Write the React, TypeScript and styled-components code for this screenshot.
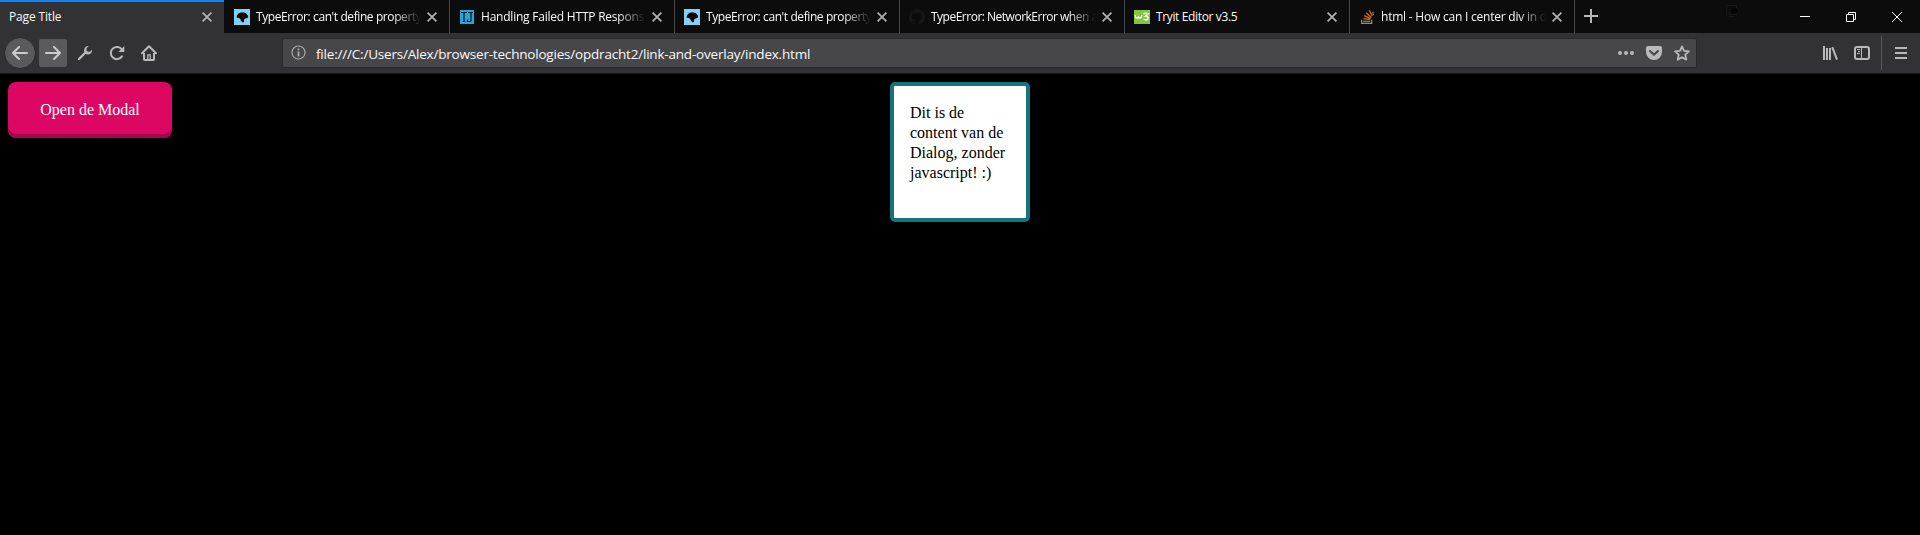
import React from "react";
import styled, { createGlobalStyle } from "styled-components";

const GlobalStyle = createGlobalStyle`
  * { box-sizing: border-box; }
  body { margin: 0; background: #000; overflow: hidden; }
  svg { display: block; flex: none; }
`;

const Window = styled.div`
  width: 1920px;
  height: 535px;
  display: flex;
  flex-direction: column;
  background: #000;
  font-family: "Open Sans", "Noto Sans", sans-serif;
`;

const TabBar = styled.div`
  height: 33px;
  display: flex;
  background: #0c0c0d;
`;

const Tab = styled.div<{ $active?: boolean }>`
  width: ${(p) => (p.$active ? 224 : 225)}px;
  height: 33px;
  display: flex;
  align-items: center;
  padding: 1px 12px 0 9px;
  background: ${(p) => (p.$active ? "#323234" : "transparent")};
  border-left: ${(p) => (p.$active ? "0" : "1px solid #4a4a4b")};
  box-shadow: ${(p) => (p.$active ? "inset 0 2px #0a84ff" : "none")};

  &:nth-child(2) { border-left-color: #0c0c0d; }
`;

const Favicon = styled.span`
  width: 16px;
  height: 16px;
  margin-right: 6px;
`;

const TabTitle = styled.span<{ $spacing: number; $fade?: boolean }>`
  flex: 1;
  min-width: 0;
  margin-right: 6px;
  white-space: nowrap;
  color: #f9f9fa;
  font-size: 12px;
  line-height: 18px;
  letter-spacing: ${(p) => p.$spacing}px;
  ${(p) => p.$fade && "mask-image: linear-gradient(to left, transparent 0, #000 28px);"}
`;

const NewTab = styled.div`
  border-left: 1px solid #4a4a4b;
  padding: 9px 0 0 9px;
  flex: 1;
`;

const SendTab = styled.div`
  padding: 5px 62px 0 0;
`;

const WindowButtons = styled.div`
  display: flex;
  gap: 36px;
  padding: 12px 18px 0 0;
`;

const NavBar = styled.div`
  height: 41px;
  display: flex;
  align-items: center;
  padding: 0 13px 1px 4px;
  background: #323234;
  border-bottom: 1px solid #18181a;
`;

const BackButton = styled.div`
  width: 32px;
  height: 32px;
  display: grid;
  place-items: center;
  border-radius: 50%;
  background: #5a5a5c;
  border: 1px solid #29292b;
`;

const ForwardButton = styled.div`
  width: 28px;
  height: 28px;
  margin: 0 10px 0 3px;
  display: grid;
  place-items: center;
  border-radius: 2px;
  background: #5a5a5c;
`;

const NavTools = styled.div`
  display: flex;
  gap: 16px;
`;

const UrlBar = styled.div`
  width: 1415px;
  height: 30px;
  margin-left: 125px;
  display: flex;
  align-items: center;
  padding: 0 6px 0 8px;
  background: #474749;
  border: 1px solid #29292b;
  border-radius: 2px;
`;

const Url = styled.span`
  flex: 1;
  margin-left: 10px;
  padding-top: 2px;
  color: #f9f9fa;
  font-size: 13.5px;
  line-height: 20px;
  letter-spacing: -0.2px;
  white-space: nowrap;
`;

const UrlActions = styled.div`
  display: flex;
  gap: 12px;
`;

const SideTools = styled.div`
  margin-left: auto;
  display: flex;
  align-items: center;
  gap: 16px;
`;

const Separator = styled.div`
  width: 1px;
  height: 34px;
  margin: 0 -3px 0 -5px;
  background: #5a5a5c;
`;

const Page = styled.main`
  flex: 1;
  padding: 8px;
  display: grid;
  grid-template-columns: 1fr 140px 1fr;
  align-items: start;
  font-family: "Liberation Serif", serif;
  font-size: 16px;
  line-height: 20px;
`;

const OpenButton = styled.a`
  width: 164px;
  height: 56px;
  display: grid;
  place-items: center;
  color: #fff;
  background: #db0762;
  border-radius: 8px;
  box-shadow: inset 0 -4px #a6064e;
`;

const Dialog = styled.div`
  width: 140px;
  height: 140px;
  padding: 17px 16px 15px;
  background: #fff;
  color: #000;
  border: 4px solid #16727c;
  border-radius: 5px;
`;

const ink = "#b9b9ba";

const CloseIcon = () => (
  <svg width="10" height="10" viewBox="0 0 10 10" stroke="#b4b4b5" strokeWidth="1.7">
    <path d="M.6.6l8.8 8.8M9.4.6L.6 9.4" />
  </svg>
);

const MdnIcon = () => (
  <svg width="16" height="16" viewBox="0 0 16 16">
    <path fill="#83d0f2" d="M0 0h16v16H0z" />
    <path d="M2.500 8.500L3 6.500 4.200 4.800 6.500 3.500h3L12 4.200l1.300 1.800.9 1-.4 1.800-2.300.8-1.500.9.1 2.200-1.300.8-2-1.700-.4-1.600-1-.9z" />
  </svg>
);

const TjIcon = () => (
  <svg width="16" height="16" viewBox="0 0 16 16">
    <path fill="#20a8dd" d="M1 1h14v14H1z" />
    <path d="M2 3.500h6M5 3.500V13M3.800 12.500h2.400M9 3.500h5M12 3.500v8q0 1-1 1H8.500v-2" fill="none" stroke="#071014" strokeWidth="1.200" />
  </svg>
);

const GithubIcon = () => (
  <svg width="16" height="16" viewBox="0 0 16 16" fill="#171718">
    <path d="M8 0a8 8 0 0 0-2.500 15.600c.4.1.5-.2.5-.4v-1.400c-2.200.5-2.700-1-2.700-1-.4-.9-.9-1.200-.9-1.200-.7-.5.1-.5.1-.5.8.1 1.200.8 1.200.8.7 1.300 1.900.9 2.300.7.1-.5.3-.9.5-1.100-1.800-.2-3.600-.9-3.600-4 0-.9.3-1.600.8-2.100-.1-.2-.4-1 .1-2.100 0 0 .7-.2 2.200.8a7.600 7.600 0 0 1 4 0c1.500-1 2.200-.8 2.200-.8.4 1.100.2 1.900.1 2.100.5.6.8 1.300.8 2.100 0 3.100-1.900 3.800-3.700 4 .3.3.6.8.6 1.500v2.200c0 .2.1.5.5.4A8 8 0 0 0 8 0z" />
  </svg>
);

const W3Icon = () => (
  <svg width="16" height="16" viewBox="0 0 16 16">
    <path fill="#83c440" d="M0 1h16v14H0z" />
    <path d="M1.200 6v1.200q0 1.800 1.500 1.800T4.400 7.200Q4.400 9 6 9T7.800 6.500V6M9.500 5.200q1-1.500 2.900-.9 1.800 1.400-.8 2.800 3.400.3 2.200 2.900-1.800 1.900-4.200 0M14.700 4v1.500" fill="none" stroke="#fff" strokeWidth="1.350" />
  </svg>
);

const StackIcon = () => (
  <svg width="16" height="16" viewBox="0 0 16 16" fill="none">
    <path d="M2.700 10.800v3.600h10v-3.600" stroke="#8d8f92" strokeWidth="1.200" />
    <path d="M4.200 12.300h7M4.400 9.700l6.800 1M5.200 6.600l6.400 3M7.200 3.700l5 4.800M10.200 1.200l3.200 6M13.900 2.700l.3 3.500" stroke="#d5681d" strokeWidth="1.300" />
  </svg>
);

const Arrow = ({ flip = false }: { flip?: boolean }) => (
  <svg width="16" height="16" viewBox="0 0 16 16" fill="none" stroke="#cbcbcc" strokeWidth="2" strokeLinecap="round" strokeLinejoin="round">
    <path d={flip ? "M1 8h14M9 2l6 6-6 6" : "M15 8H1M7 2L1 8l6 6"} />
  </svg>
);

const WrenchIcon = () => (
  <svg width="16" height="16" viewBox="0 0 16 16">
    <path d="M2 14l6-6" stroke={ink} strokeWidth="2.400" strokeLinecap="round" />
    <path fill={ink} d="M11.800 1.100L9.500 3.200v2.200l1.300 1.300H13l2-2.100c.3 2-.6 4.200-2.700 4.700-1.500.4-3-.1-4-1.100-1-1-1.500-2.500-1-4C7.800 2 9.800.8 11.800 1.100z" />
  </svg>
);

const ReloadIcon = () => (
  <svg width="16" height="16" viewBox="0 0 16 16" fill="none">
    <path d="M13.200 5A6.100 6.100 0 1 0 13 11.400" stroke={ink} strokeWidth="2" strokeLinecap="round" />
    <path d="M15.300 1v6H9.300z" fill={ink} />
  </svg>
);

const HomeIcon = () => (
  <svg width="16" height="16" viewBox="0 0 16 16" fill="none" stroke={ink}>
    <path d="M1 8.300l7-7 7 7" strokeWidth="2" strokeLinecap="round" strokeLinejoin="round" />
    <path d="M3 8v6.200q0 .8.800.8h8.400q.8 0 .8-.8V8" strokeWidth="2" />
    <path d="M6.800 15V9.800h2.400V15" strokeWidth="1.300" />
  </svg>
);

const InfoIcon = () => (
  <svg width="15" height="15" viewBox="0 0 15 15" fill="none" stroke="#adadae">
    <circle cx="7.500" cy="7.500" r="6.500" strokeWidth="1.100" />
    <path d="M7.500 6.500v5M7.500 3.500v1.800" strokeWidth="1.700" />
  </svg>
);

const DotsIcon = () => (
  <svg width="16" height="16" viewBox="0 0 16 16" fill={ink}>
    <circle cx="2" cy="8" r="2" /><circle cx="8" cy="8" r="2" /><circle cx="14" cy="8" r="2" />
  </svg>
);

const PocketIcon = () => (
  <svg width="16" height="16" viewBox="0 0 16 16">
    <path fill={ink} d="M2 1h12q2 0 2 2v4a8 8 0 0 1-16 0V3q0-2 2-2z" />
    <path d="M4 6l4 3.800L12 6" fill="none" stroke="#474749" strokeWidth="2" strokeLinecap="round" strokeLinejoin="round" />
  </svg>
);

const StarIcon = () => (
  <svg width="16" height="16" viewBox="0 0 16 16">
    <path d="M8 1.400l2 4.400 4.900.5-3.600 3.400 1 4.900L8 12.200l-4.300 2.400 1-4.900L1.100 6.300 6 5.800z" fill="none" stroke={ink} strokeWidth="1.800" strokeLinejoin="round" />
  </svg>
);

const LibraryIcon = () => (
  <svg width="16" height="16" viewBox="0 0 16 16" fill="none" stroke={ink} strokeWidth="2">
    <path d="M2 1v14M5 3v12M8 3v12M10.300 2.200l4.700 12.500" />
  </svg>
);

const SidebarIcon = () => (
  <svg width="16" height="16" viewBox="0 0 16 16" fill="none" stroke={ink}>
    <rect x="1" y="2" width="14" height="12" rx="2" strokeWidth="2" />
    <path d="M7.500 2v12M3 4.500h3M4 6.500h2M3 8.500h3" strokeWidth="1" />
  </svg>
);

const MenuIcon = () => (
  <svg width="12" height="12" viewBox="0 0 12 12" fill={ink}>
    <path d="M0 0h12v2H0zM0 5h12v2H0zM0 10h12v2H0z" />
  </svg>
);

const tabs = [
  { title: "TypeError: can't define property", icon: <MdnIcon />, spacing: -0.41, fade: true },
  { title: "Handling Failed HTTP Respons", icon: <TjIcon />, spacing: -0.22, fade: true },
  { title: "TypeError: can't define property", icon: <MdnIcon />, spacing: -0.41, fade: true },
  { title: "TypeError: NetworkError when a", icon: <GithubIcon />, spacing: -0.5, fade: true },
  { title: "Tryit Editor v3.5", icon: <W3Icon />, spacing: -0.36, fade: false },
  { title: "html - How can I center div in d", icon: <StackIcon />, spacing: -0.22, fade: true },
];

export default function App() {
  return (
    <Window>
      <GlobalStyle />
      <TabBar>
        <Tab $active>
          <TabTitle $spacing={-0.15}>Page Title</TabTitle>
          <CloseIcon />
        </Tab>
        {tabs.map((tab, i) => (
          <Tab key={i}>
            <Favicon>{tab.icon}</Favicon>
            <TabTitle $spacing={tab.spacing} $fade={tab.fade}>{tab.title}</TabTitle>
            <CloseIcon />
          </Tab>
        ))}
        <NewTab>
          <svg width="14" height="14" viewBox="0 0 14 14" stroke={ink} strokeWidth="2"><path d="M7 0v14M0 7h14" /></svg>
        </NewTab>
        <SendTab>
          <svg width="12" height="12" viewBox="0 0 12 12" fill="none" stroke="#18181a">
            <path d="M10.500 3V.5h-10v9h10V8M3 11.500h5" /><path d="M6.500 4.500h4v3h-4z" stroke="#000" strokeWidth="1.500" />
          </svg>
        </SendTab>
        <WindowButtons>
          <svg width="10" height="10" viewBox="0 0 10 10"><path d="M0 4h10v1H0z" fill="#fff" /></svg>
          <svg width="10" height="10" viewBox="0 0 10 10" fill="none" stroke="#fff"><path d="M.5 2.500h7v7h-7zM2.500 2.500v-2h7v7h-2" /></svg>
          <svg width="10" height="10" viewBox="0 0 10 10" stroke="#fff"><path d="M0 0l10 10M10 0L0 10" /></svg>
        </WindowButtons>
      </TabBar>
      <NavBar>
        <BackButton><Arrow /></BackButton>
        <ForwardButton><Arrow flip /></ForwardButton>
        <NavTools><WrenchIcon /><ReloadIcon /><HomeIcon /></NavTools>
        <UrlBar>
          <InfoIcon />
          <Url>file:///C:/Users/Alex/browser-technologies/opdracht2/link-and-overlay/index.html</Url>
          <UrlActions><DotsIcon /><PocketIcon /><StarIcon /></UrlActions>
        </UrlBar>
        <SideTools>
          <LibraryIcon />
          <SidebarIcon />
          <Separator />
          <MenuIcon />
        </SideTools>
      </NavBar>
      <Page>
        <OpenButton>Open de Modal</OpenButton>
        <Dialog>Dit is de content van de Dialog, zonder javascript! :)</Dialog>
      </Page>
    </Window>
  );
}
